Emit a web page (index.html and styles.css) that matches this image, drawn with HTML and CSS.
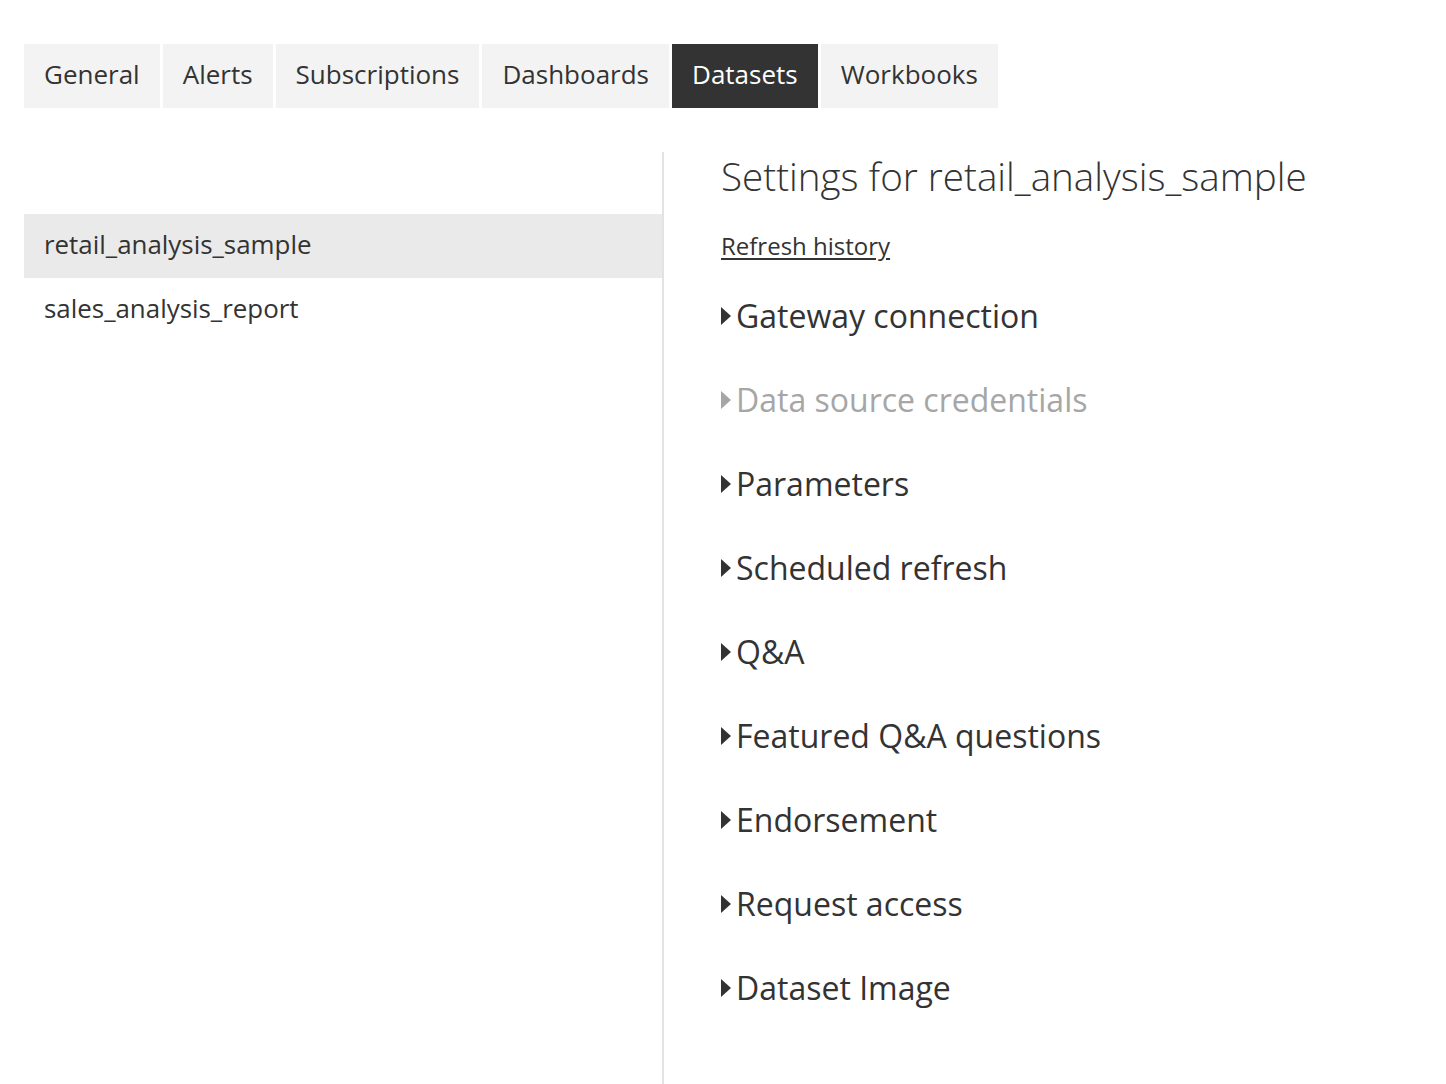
FILE: index.html
```html
<!DOCTYPE html>
<html>
<head>
<meta charset="utf-8">
<link rel="stylesheet" href="styles.css">
</head>
<body>
<div class="page">
  <nav class="tabs">
    <div class="tab">General</div>
    <div class="tab">Alerts</div>
    <div class="tab">Subscriptions</div>
    <div class="tab">Dashboards</div>
    <div class="tab active">Datasets</div>
    <div class="tab">Workbooks</div>
  </nav>
  <div class="content">
    <aside class="list">
      <div class="list-item selected">retail_analysis_sample</div>
      <div class="list-item">sales_analysis_report</div>
    </aside>
    <main class="settings">
      <h1 class="title">Settings for retail_analysis_sample</h1>
      <a class="link" href="#">Refresh history</a>
      <div class="sections">
        <div class="section"><span class="caret"></span>Gateway connection</div>
        <div class="section disabled"><span class="caret"></span>Data source credentials</div>
        <div class="section"><span class="caret"></span>Parameters</div>
        <div class="section"><span class="caret"></span>Scheduled refresh</div>
        <div class="section"><span class="caret"></span>Q&amp;A</div>
        <div class="section"><span class="caret"></span>Featured Q&amp;A questions</div>
        <div class="section"><span class="caret"></span>Endorsement</div>
        <div class="section"><span class="caret"></span>Request access</div>
        <div class="section"><span class="caret"></span>Dataset Image</div>
      </div>
    </main>
  </div>
</div>
</body>
</html>
```
FILE: styles.css
```css
html, body {
  margin: 0;
  padding: 0;
  background: #ffffff;
  height: 100%;
}
body {
  font-family: "Open Sans", "Noto Sans", sans-serif;
  color: #333333;
}
.page {
  padding: 44px 24px 0 24px;
  display: flex;
  flex-direction: column;
  height: 100%;
  box-sizing: border-box;
}
.tabs {
  display: flex;
  gap: 3px;
}
.tab {
  height: 64px;
  padding: 0 20px 4px 20px;
  display: flex;
  align-items: center;
  background: #f3f3f3;
  font-size: 26px;
  color: #333333;
  box-sizing: border-box;
}
.tab.active {
  background: #333333;
  color: #ffffff;
}
.content {
  display: flex;
  flex: 1;
  margin-top: 44px;
}
.list {
  width: 638px;
  padding-top: 62px;
  border-right: 2px solid #e3e3e3;
}
.list-item {
  height: 64px;
  padding: 0 20px 4px 20px;
  display: flex;
  align-items: center;
  font-size: 25.9px;
  color: #333333;
  box-sizing: border-box;
}
.list-item.selected {
  background: #eaeaea;
}
.settings {
  padding-left: 57px;
  display: flex;
  flex-direction: column;
  align-items: flex-start;
}
.title {
  margin: 0;
  font-weight: 300;
  font-size: 38.6px;
  line-height: 48px;
  color: #333333;
}
.link {
  margin-top: 30px;
  font-size: 24px;
  line-height: 32px;
  color: #333333;
  text-decoration: underline;
  text-underline-offset: 3px;
}
.sections {
  display: flex;
  flex-direction: column;
  margin-top: 11px;
}
.section {
  height: 84px;
  display: flex;
  align-items: center;
  font-size: 32px;
  color: #333333;
}
.section.disabled {
  color: #a6a6a6;
}
.caret {
  width: 0;
  height: 0;
  border-top: 9px solid transparent;
  border-bottom: 9px solid transparent;
  border-left: 10px solid currentColor;
  margin-right: 5px;
  margin-top: 2px;
}
.section.disabled .caret {
  border-left-color: #a6a6a6;
}
```
